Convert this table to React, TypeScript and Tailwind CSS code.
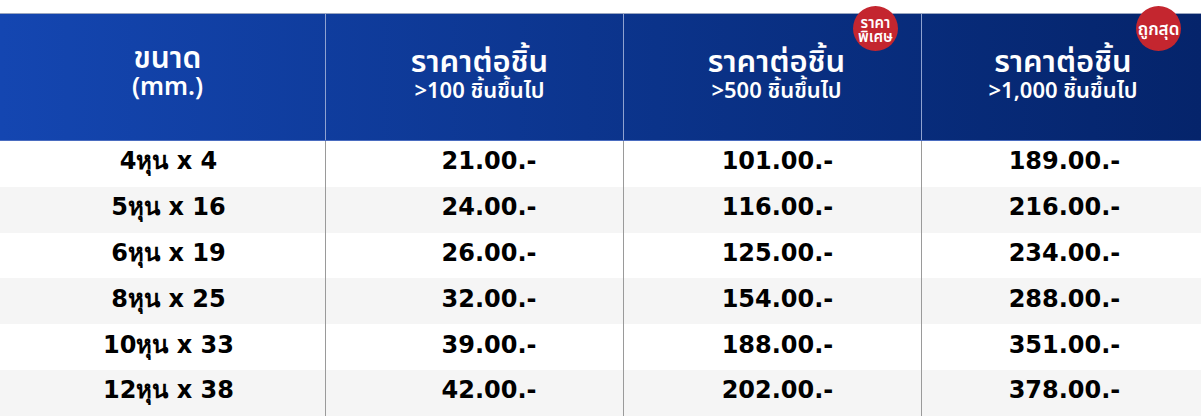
import React from "react";

const rows = [
  ["4หุน x 4", "21.00.-", "101.00.-", "189.00.-"],
  ["5หุน x 16", "24.00.-", "116.00.-", "216.00.-"],
  ["6หุน x 19", "26.00.-", "125.00.-", "234.00.-"],
  ["8หุน x 25", "32.00.-", "154.00.-", "288.00.-"],
  ["10หุน x 33", "39.00.-", "188.00.-", "351.00.-"],
  ["12หุน x 38", "42.00.-", "202.00.-", "378.00.-"],
];

const headFont = { fontFamily: '"Noto Sans", "Noto Sans Thai", sans-serif' };
const pads = ["pl-[10px]", "pl-[10px]", "pl-[8px]", "pl-[3px]"];

export default function App() {
  return (
    <div className="w-[1201px] h-[416px] bg-white overflow-hidden pt-[13px]" style={{ fontFamily: '"DejaVu Sans", sans-serif' }}>
      <div className="grid grid-cols-[326px_298px_298px_279px] h-[128px] border-t border-[#9aa6c0] border-b border-b-[#4a6cc0] bg-gradient-to-r from-[#1446b1] to-[#05246b] text-white relative">
        <div className="flex flex-col items-center justify-center border-r border-[#8fa2d0] pb-[14px] pl-[10px]" style={headFont}>
          <div className="text-[30px] leading-[30px] font-semibold">ขนาด</div>
          <div className="text-[25px] leading-[27px] font-semibold">(mm.)</div>
        </div>
        {[">100 ชิ้นขึ้นไป", ">500 ชิ้นขึ้นไป", ">1,000 ชิ้นขึ้นไป"].map((s, i) => (
          <div key={i} className={`relative flex flex-col items-center justify-center pb-[8px] ${pads[i + 1]} ${i < 2 ? "border-r border-[#8fa2d0]" : ""}`} style={headFont}>
            <div className="text-[31px] leading-[32px] font-semibold">ราคาต่อชิ้น</div>
            <div className="text-[22px] leading-[26px] font-semibold">{s}</div>
          </div>
        ))}
        <div className="absolute left-[853px] top-[-8px] w-[45px] h-[45px] rounded-full bg-[#c4262f] flex flex-col items-center justify-center text-white pt-[1px]" style={headFont}>
          <span className="text-[15px] font-semibold leading-[14px]">ราคา</span>
          <span className="text-[15px] font-semibold leading-[14px]">พิเศษ</span>
        </div>
        <div className="absolute left-[1136px] top-[-8px] w-[45px] h-[45px] rounded-full bg-[#c4262f] flex items-center justify-center text-white" style={headFont}>
          <span className="text-[17px] font-semibold leading-[20px]">ถูกสุด</span>
        </div>
      </div>
      {rows.map((r, i) => (
        <div key={i} className={`grid grid-cols-[326px_298px_298px_279px] h-[45.8px] ${i % 2 ? "bg-[#f5f5f5]" : "bg-white"} text-black text-[24px] font-bold`}>
          <div className="flex items-center justify-center border-r border-[#9a9a9a] pl-[12px] pb-[5px]">{r[0]}</div>
          <div className="flex items-center justify-center border-r border-[#9a9a9a] pl-[29px] pb-[5px]">{r[1]}</div>
          <div className="flex items-center justify-center border-r border-[#9a9a9a] pl-[10px] pb-[5px]">{r[2]}</div>
          <div className="flex items-center justify-center pl-[6px] pb-[5px]">{r[3]}</div>
        </div>
      ))}
    </div>
  );
}
